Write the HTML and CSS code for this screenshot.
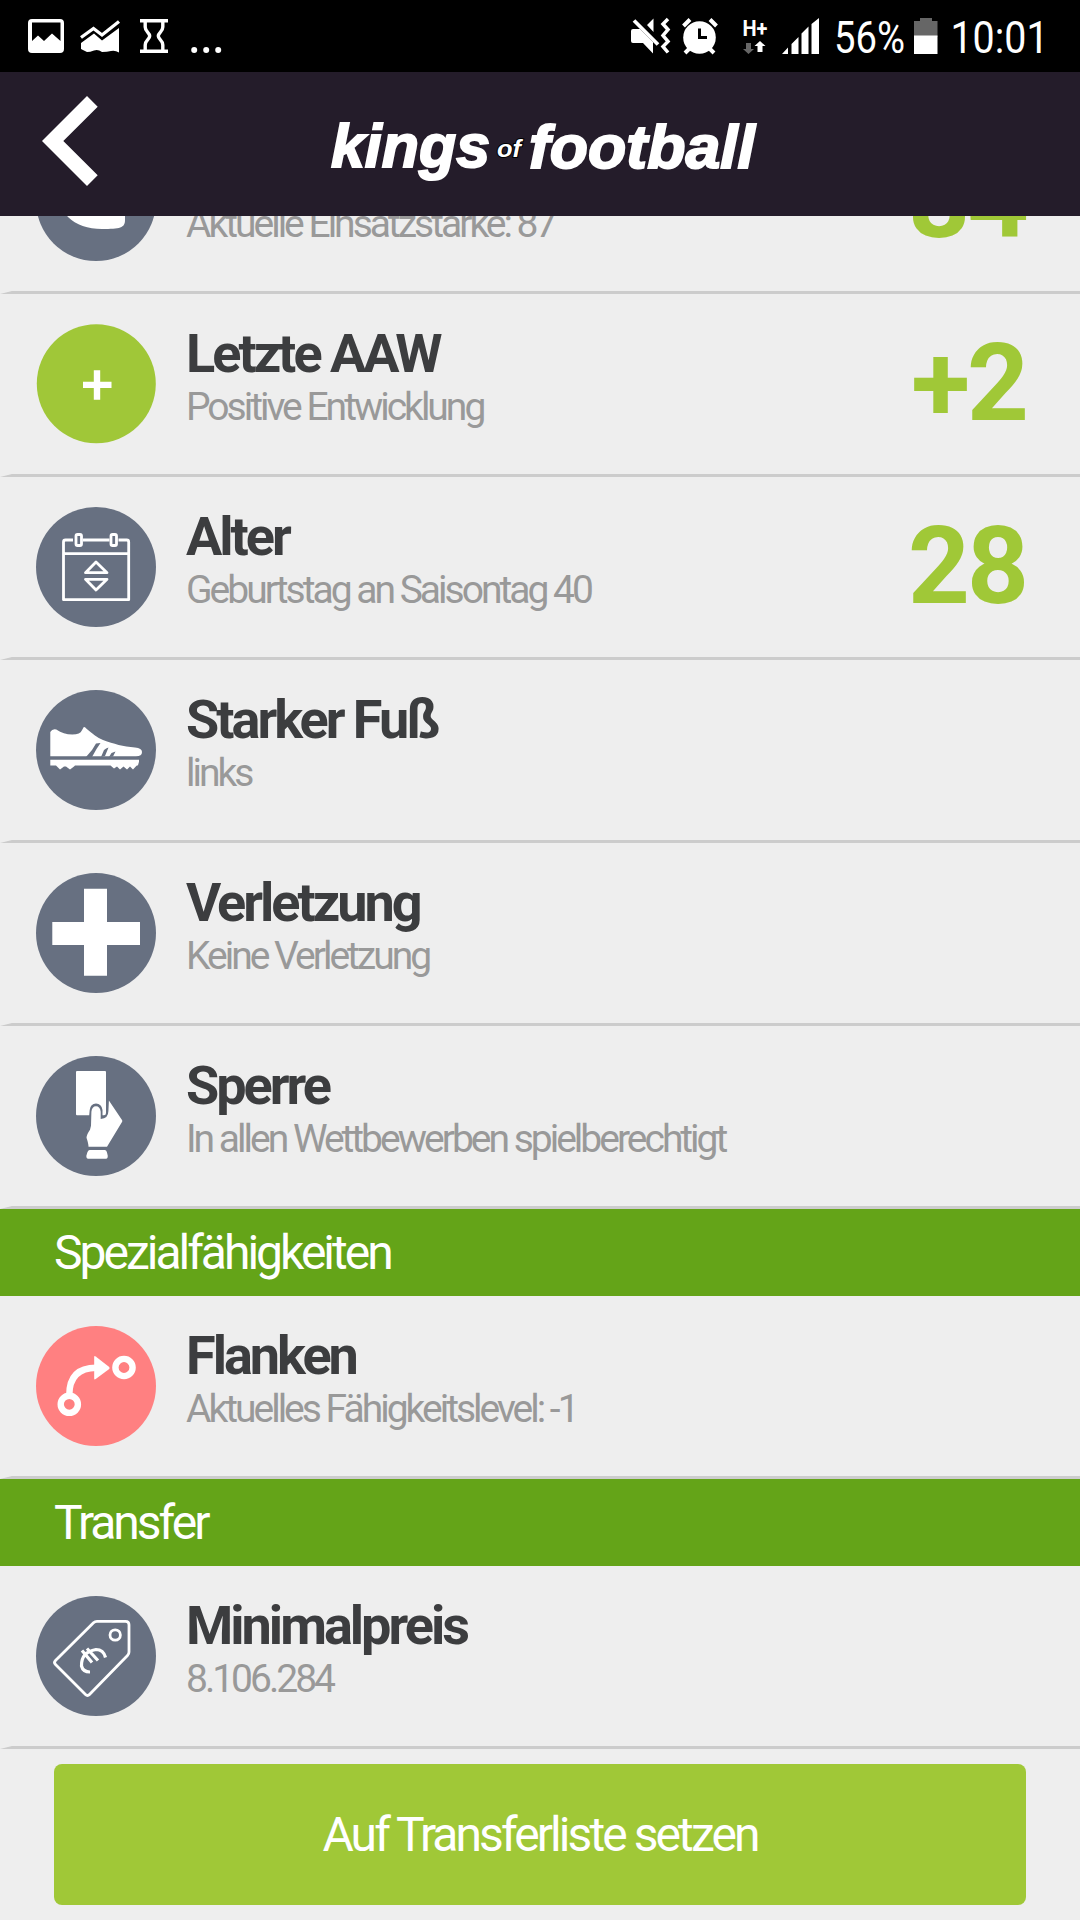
FILE: index.html
```html
<!DOCTYPE html>
<html lang="de">
<head>
<meta charset="utf-8">
<title>Kings of Football</title>
<link rel="stylesheet" href="styles.css">
</head>
<body>
<div class="statusbar">
  <div class="notifications">
    <svg width="36" height="34" viewBox="0 0 36 34"><path fill="#fff" fill-rule="evenodd" d="M4 0h28a4 4 0 0 1 4 4v26a4 4 0 0 1-4 4H4a4 4 0 0 1-4-4V4a4 4 0 0 1 4-4zM4 3.500V22l6-5.500 6 5.500 8-7.500 8.500 7.500V3.500z"/></svg>
    <svg class="chart" width="38" height="34" viewBox="0 0 38 34"><path d="M0 18.500L12.500 9.500 21 16 38 2.500" fill="none" stroke="#fff" stroke-width="3.300"/><path fill="#fff" d="M0 24l13-9.500 8 7L38 9v24.500q-4-2.500-8-1.500T21 33q-4-3-8-1.500T6 33L0 30z"/></svg>
    <svg class="hourglass" width="28" height="34" viewBox="0 0 28 34"><path d="M0 1.700h28M0 32.300h28M5.200 2v6c0 5 4.500 5.500 4.500 9s-4.500 4-4.500 9v6M22.800 2v6c0 5-4.500 5.500-4.500 9s4.500 4 4.500 9v6" fill="none" stroke="#fff" stroke-width="3.400"/></svg>
    <svg class="dots" width="31" height="34" viewBox="0 0 31 34"><g fill="#fff"><circle cx="3.200" cy="31" r="3"/><circle cx="15.200" cy="31" r="3"/><circle cx="27.200" cy="31" r="3"/></g></svg>
  </div>
  <div class="indicators">
    <svg width="39" height="36" viewBox="0 0 39 36"><path fill="#fff" d="M0 13q0-2 2-2h7l13 13v11.500L12 25H2q-2 0-2-2zM16 7l6.500-6.500V14z"/><path d="M3 2.500L27 26.500" stroke="#fff" stroke-width="3.800"/><path d="M37 1l-5 5 5 5.500-5 6 5 6-5 5 5 6" fill="none" stroke="#fff" stroke-width="3.500"/></svg>
    <svg class="alarm" width="36" height="36" viewBox="0 0 36 36"><circle cx="17.500" cy="19.500" r="16.300" fill="#fff"/><path d="M1.500 8L8 1.500M34.500 8L28 1.500M3 35l6-6M32 35l-6-6" stroke="#fff" stroke-width="4"/><path d="M17.500 10.500V19.500H25" fill="none" stroke="#000" stroke-width="3"/></svg>
    <svg class="network" width="26" height="44" viewBox="0 -8 26 44"><text x="0.500" y="18" class="network-text" textLength="25" lengthAdjust="spacingAndGlyphs">H+</text><path fill="#666" d="M4 25h5v6h3l-5.500 5L1 31h3z"/><path fill="#fff" d="M15.500 34h5v-6h3L18 23l-5.500 5h3z"/></svg>
    <svg class="signal" width="37" height="36" viewBox="0 0 37 36"><path fill="#fff" d="M0 36l6-6.500V36zM9.500 36V26l7-7v17zM19.500 36V15.500l7-7V36zM29.500 36V6L37 0v36z"/></svg>
    <svg class="percent" width="72" height="60" viewBox="0 -10 72 60"><text x="0" y="35" class="status-text" textLength="71" lengthAdjust="spacingAndGlyphs">56%</text></svg>
    <svg class="battery" width="24" height="36" viewBox="0 0 24 36"><path fill="#666" d="M0 3h6V0h12v3h5.500v16H0z"/><path fill="#fff" d="M0 17.500h23.500V36H0z"/></svg>
    <svg class="clock" width="99" height="60" viewBox="0 -10 99 60"><text x="0.500" y="35" class="status-text" textLength="98" lengthAdjust="spacingAndGlyphs">10:01</text></svg>
  </div>
</div>

<header class="header">
  <svg class="back" width="56" height="90" viewBox="0 0 56 90"><path fill="#fff" d="M45 0l10.700 10.700L21.300 45l34.400 34.300L45 90 0 45z"/></svg>
  <svg class="logo" width="450" height="80" viewBox="0 0 450 80">
    <g class="logo-text"><text x="5" y="56.500" textLength="159" lengthAdjust="spacingAndGlyphs">kings</text><text x="203" y="58" textLength="226" lengthAdjust="spacingAndGlyphs">football</text></g>
    <text class="logo-of" x="171" y="46.500" textLength="24" lengthAdjust="spacingAndGlyphs">of</text>
  </svg>
</header>

<main class="content">
  <section class="row row-partial">
    <svg class="icon" viewBox="0 0 120 120"><circle cx="60" cy="60" r="60"/><path class="fill" d="M27 50c-2 12 0 20 5 26 8 8 20 12 34 12 18 0 23-1 23-9V66c-8-6-20-4-28 2-8-10-18-14-34-18z"/></svg>
    <div class="text"><h2>Stärke</h2><p>Aktuelle Einsatzstärke: 87</p></div>
    <strong>84</strong>
  </section>
  <section class="row">
    <svg class="icon lime" viewBox="0 0 120 120"><circle cx="60.300" cy="59.800" r="59.500"/><path class="fill" d="M57.800 46.300h6.400v11.500h11.300V64H64.200v11.700h-6.400V64H47v-6.200h10.800z"/></svg>
    <div class="text"><h2>Letzte AAW</h2><p>Positive Entwicklung</p></div>
    <strong>+2</strong>
  </section>
  <section class="row">
    <svg class="icon" viewBox="0 0 120 120"><circle cx="60" cy="60" r="60"/><g class="line"><path d="M37 33H29.500q-2 0-2 2V92.700H92.700V35q0-2-2-2H82.500M47 33H73.500M27.500 46.700H92.700"/><rect x="40" y="27.500" width="5.500" height="11" rx="1.500"/><rect x="75" y="27.500" width="5.500" height="11" rx="1.500"/><path d="M60 55L49.500 65.700H71zM49.500 72.300H71L60 83z"/></g></svg>
    <div class="text"><h2>Alter</h2><p>Geburtstag an Saisontag 40</p></div>
    <strong>28</strong>
  </section>
  <section class="row">
    <svg class="icon" viewBox="0 0 120 120"><circle cx="60" cy="60" r="60"/><path class="fill" d="M14.300 42q2-3.500 6-2.500c5 3.500 10 5 16 5q8 0 9.500-4l2-3.500q1-.500 3 2C57 44 61 47.500 67 50c11 4 20 6.500 32 7.500q7 .500 7 4.500 0 4.300-6 4.300H14.300zM14.300 69.700H103v2l-1 3.600-1.500.500-3.500 3.700-3-3-3 3-3.500-3-3.500 3-3-3-3 2-3.500-3H39l-1 1-4 3-4-3h-2l-4 3-4-4H14.300z"/><path d="M50 67L56 60 60 53.500l4.500-.500-4 6L56 67zM65 67l3-7q2-2 4.500-2.500L69 66zM73 67l2.500-4 4-1.500-2.500 5z"/></svg>
    <div class="text"><h2>Starker Fuß</h2><p>links</p></div>
  </section>
  <section class="row">
    <svg class="icon" viewBox="0 0 120 120"><circle cx="60" cy="60" r="60"/><path class="fill" d="M48 15.700h23V49h33v23H71v30.700H48V72H16.300V49H48z"/></svg>
    <div class="text"><h2>Verletzung</h2><p>Keine Verletzung</p></div>
  </section>
  <section class="row">
    <svg class="icon" viewBox="0 0 120 120"><circle cx="60" cy="60" r="60"/><path class="fill" d="M41 15h28q1 0 1 1v41q0 2.300-2 2.300h-1.500V54q-1-6.500-6.500-6.500T53.700 54l-.500 5.300H41q-1 0-1-1V16q0-1 1-1z"/><path class="fill" d="M72.900 44.500L86 64q.700 1 0 2L71 90.700H52.500q0-3-2-9 0-3 3.500-8l1-4 .400-14q.600-5.500 4.600-5.500t4.700 5.500v7.300q7.700-.500 7.700-8zM53.500 94H69q1.500 0 2 2.500l.800 3.500q0 2.700-1.500 2.700H51.800q-1.500 0-1.500-2.700l1-3.500q.700-2.500 2.200-2.500z"/></svg>
    <div class="text"><h2>Sperre</h2><p>In allen Wettbewerben spielberechtigt</p></div>
  </section>
  <h3 class="section">Spezialfähigkeiten</h3>
  <section class="row">
    <svg class="icon coral" viewBox="0 0 120 120"><circle cx="60" cy="60" r="60"/><g class="route"><circle cx="88" cy="41.500" r="8.600"/><circle cx="33.300" cy="78.300" r="8.600"/><path d="M33.300 69q0-27.300 27-27.300"/></g><path class="fill" d="M58.200 31q0-1.500 1.500-.500l13.500 10.500q.800 1 0 2L59.700 53q-1.500 1-1.500-.500z"/></svg>
    <div class="text"><h2>Flanken</h2><p>Aktuelles Fähigkeitslevel: -1</p></div>
  </section>
  <h3 class="section">Transfer</h3>
  <section class="row">
    <svg class="icon" viewBox="0 0 120 120"><circle cx="60" cy="60" r="60"/><g class="line"><path d="M61 25.300H89.500q3.500 0 3.500 3.500V56q0 2-1.500 3.500L53.500 98.500q-2 2-4 0L19.500 68.500q-2-2 0-4L57.500 26.800q1.500-1.500 3.500-1.500z"/><circle cx="79.200" cy="39" r="5.200"/><path class="euro" d="M69.500 61.500Q67.500 53.500 60 53.500 45 56 45.500 70q1.500 6 8.500 6M46 54.500L56 66.500M51 52.500L62 64.500"/></g></svg>
    <div class="text"><h2>Minimalpreis</h2><p>8.106.284</p></div>
  </section>
  <button class="transfer">Auf Transferliste setzen</button>
</main>
</body>
</html>
```
FILE: styles.css
```css
* { box-sizing: border-box; margin: 0; padding: 0; }

body {
  width: 1080px;
  height: 1920px;
  overflow: hidden;
  background: #eee;
  font-family: Roboto, sans-serif;
}

svg { display: block; flex: none; overflow: visible; }

.statusbar {
  display: flex;
  justify-content: space-between;
  height: 72px;
  padding: 18px 31px 0 28px;
  background: #000;
}

.notifications, .indicators { display: flex; align-items: flex-start; }
.notifications { padding-top: 1px; }
.chart { margin-left: 17px; }
.hourglass { margin-left: 21px; }
.dots { margin-left: 23px; }
.alarm { margin-left: 12px; }
.network { margin: -8px 0 0 24px; }
.signal { margin-left: 14px; }
.percent { margin: -10px 0 0 15px; }
.battery { margin-left: 8px; }
.clock { margin: -10px 0 0 12px; }
.status-text { fill: #fff; font-size: 45px; }
.network-text { fill: #fff; font-size: 22px; font-weight: 700; }

.header {
  display: grid;
  grid-template-columns: 100px 1fr 100px;
  height: 144px;
  background: #241c2a;
}
.back { margin: 24px 0 0 42px; }
.logo { margin: 38px 0 0 226px; }
.logo-text {
  fill: #fff;
  stroke: #fff;
  stroke-width: 2px;
  font: italic 700 62px "Liberation Sans", Arial, sans-serif;
}
.logo-of {
  fill: #fff;
  stroke: #000;
  stroke-width: 2px;
  paint-order: stroke;
  font: italic 700 24px "Liberation Sans", Arial, sans-serif;
}

.content { height: 1704px; overflow: hidden; }

.row {
  display: flex;
  align-items: flex-start;
  height: 183px;
  padding: 30px 54px 0 24px;
  border-left: 12px solid #eee;
  border-bottom: 3px solid #ccc;
}
.row-partial { margin-top: -105px; }

.icon { width: 120px; height: 120px; fill: #677081; }
.lime { fill: #a0c738; }
.coral { fill: #ff8081; }
.fill { fill: #fff; }
.line { fill: none; stroke: #fff; stroke-width: 2.8px; stroke-linejoin: round; }
.euro { stroke-width: 3.2px; }
.route { fill: none; stroke: #fff; stroke-width: 6.4px; }

.text { flex: 1; padding-left: 30px; white-space: nowrap; }
.text h2 {
  color: #3c3d3f;
  font-size: 54px;
  font-weight: 700;
  line-height: 60px;
  letter-spacing: -3px;
}
.text p {
  color: #999;
  font-size: 39px;
  line-height: 46px;
  letter-spacing: -3px;
}
.row strong {
  color: #a0c837;
  font-size: 108px;
  font-weight: 700;
  line-height: 118px;
  letter-spacing: -3px;
}

.section {
  height: 87px;
  padding-left: 54px;
  background: #64a418;
  color: #fff;
  font-size: 48px;
  font-weight: 400;
  line-height: 87px;
  letter-spacing: -3px;
}

.transfer {
  display: block;
  width: 972px;
  height: 141px;
  margin: 15px auto 0;
  border: 0;
  border-radius: 8px;
  background: #a0c837;
  color: #fff;
  font: 400 48px Roboto, sans-serif;
  letter-spacing: -2.92px;
}
```
